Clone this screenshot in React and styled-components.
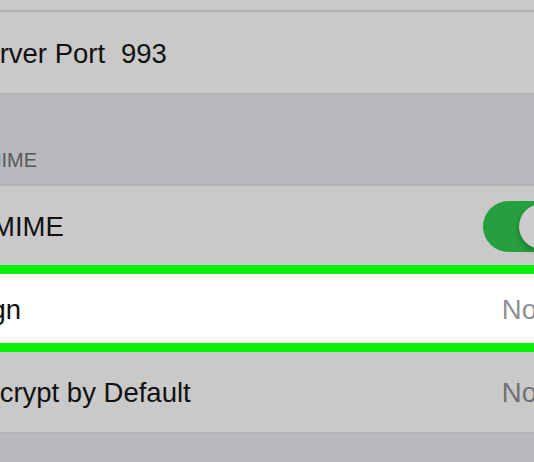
import React from "react";
import styled, { createGlobalStyle } from "styled-components";

const Global = createGlobalStyle`
  html, body { margin: 0; padding: 0; overflow: hidden; background: #bab9be; }
  body { font-family: "Liberation Sans", Arial, sans-serif; }
`;

const Viewport = styled.div`
  width: 534px;
  height: 462px;
  overflow: hidden;
  background: #bab9be;
`;

const Screen = styled.div`
  width: 640px;
  margin-left: -59px;
  display: flex;
  flex-direction: column;
`;

const Separator = styled.div`
  height: 2px;
  background: #b3b2b6;
`;

const Row = styled.div`
  height: ${(p) => p.$h}px;
  box-sizing: border-box;
  display: flex;
  align-items: center;
  padding: 2px 14px 0 25px;
  background: ${(p) => (p.$active ? "#ffffff" : "#c9c9c9")};
  font-size: 27.5px;
  line-height: 1;
  color: #111;
`;

const Label = styled.span`
  flex: ${(p) => (p.$fixed ? "0 0 155px" : "1 1 auto")};
  white-space: nowrap;
`;

const Plain = styled.span`
  white-space: nowrap;
  color: #111;
`;

const Value = styled.span`
  color: ${(p) => (p.$active ? "#8e8e93" : "#707074")};
  white-space: nowrap;
`;

const Chevron = styled.span`
  margin-left: 14px;
  width: 16px;
  display: inline-flex;
  color: #b8b8bc;
`;

const SectionGap = styled.div`
  height: ${(p) => p.$h}px;
  box-sizing: border-box;
  display: flex;
  align-items: flex-end;
  padding: 0 0 14px 25px;
  background: #bab9be;
`;

const Header = styled.span`
  font-size: 20px;
  line-height: 1;
  color: #58585c;
  text-transform: uppercase;
`;

const Highlight = styled.div`
  border-top: 9px solid #08f008;
  border-bottom: 9px solid #08f008;
`;

const Track = styled.div`
  width: 84px;
  height: 51px;
  border-radius: 26px;
  background: #26a03e;
  position: relative;
  flex: 0 0 auto;
`;

const Knob = styled.div`
  position: absolute;
  top: 3px;
  right: 3px;
  width: 45px;
  height: 45px;
  border-radius: 50%;
  background: #cdcdcd;
  box-shadow: 0 3px 6px rgba(0, 0, 0, 0.28), 0 0 1px rgba(0, 0, 0, 0.2);
`;

const Chev = () => (
  <Chevron>
    <svg width="14" height="24" viewBox="0 0 14 24" fill="none">
      <path d="M2 2l10 10-10 10" stroke="currentColor" strokeWidth="3" />
    </svg>
  </Chevron>
);

export default function App() {
  return (
    <Viewport>
      <Global />
      <Screen>
        <Row $h={10} />
        <Separator />
        <Row $h={81}>
          <Label $fixed>Server Port</Label>
          <Plain>993</Plain>
        </Row>
        <Separator />
        <SectionGap $h={89}>
          <Header>S/MIME</Header>
        </SectionGap>
        <Separator />
        <Row $h={79}>
          <Label>S/MIME</Label>
          <Track>
            <Knob />
          </Track>
        </Row>
        <Highlight>
          <Row $h={69} $active>
            <Label>Sign</Label>
            <Value $active>No</Value>
            <Chev />
          </Row>
        </Highlight>
        <Row $h={80}>
          <Label>Encrypt by Default</Label>
          <Value>No</Value>
          <Chev />
        </Row>
        <Separator />
        <SectionGap $h={40} />
      </Screen>
    </Viewport>
  );
}
